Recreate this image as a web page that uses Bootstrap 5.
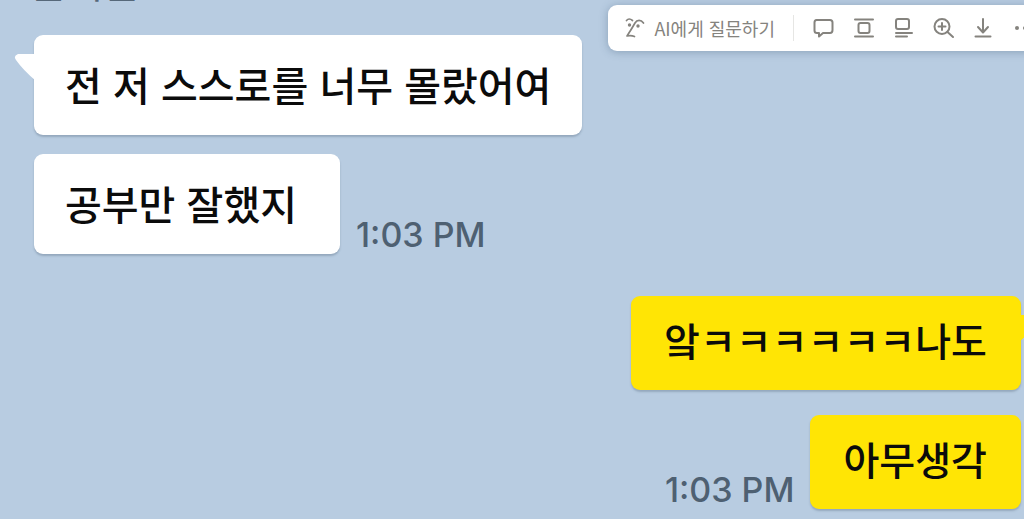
<!DOCTYPE html>
<html lang="ko">
<head>
<meta charset="utf-8">
<meta name="viewport" content="width=device-width, initial-scale=1">
<title>Chat</title>
<link href="https://cdn.jsdelivr.net/npm/bootstrap@5.3.0/dist/css/bootstrap.min.css" rel="stylesheet">
<style>
  body { background: #b8cce1; font-family: Inter, "Noto Sans CJK KR", sans-serif; }
  .chat { min-height: 100vh; }
  .sender { height: 4px; margin-left: 30px; color: #56687a; font-size: 40px; line-height: 40px; }
  .received { padding: 31px 0 0 34px; gap: 19px; }
  .sent { padding: 42px 3px 0 0; gap: 25px; }
  .bubble { border-radius: 9px; font: 500 40px/60px "Noto Sans CJK KR", sans-serif; color: #0b0b0b; box-shadow: 0 2px 2px rgba(70, 90, 110, .3); }
  .bubble-in { background: #fff; padding: 19px 31px 21px 31px; }
  .bubble-in.short { padding-right: 43px; }
  .bubble-out { background: #ffe505; font-size: 39px; padding: 13px 34px 21px 33px; }
  .tail { position: absolute; }
  .tail-in { left: -20px; top: 18px; }
  .tail-out { right: -20px; top: 18px; }
  .stamp { color: #4e6072; font-size: 34px; font-weight: 500; line-height: 38px; }
  .tools { top: 5px; right: -27px; height: 46px; padding: 0 16px; border-radius: 9px; background: #fff; color: #85837e; box-shadow: 0 1px 8px rgba(50, 80, 110, .35); }
  .tools button { color: inherit; line-height: 24px; }
  .tools svg { display: block; fill: none; stroke: currentColor; stroke-width: 2; stroke-linecap: round; stroke-linejoin: round; }
  .ask { font: 400 18px/24px "Noto Sans CJK KR", sans-serif; gap: 8px; }
  .divider { width: 1px; height: 26px; background: #e6e6e4; margin: 0 18px; }
  .actions { gap: 17px; }
</style>
</head>
<body>
<main class="chat position-relative overflow-hidden">
  <div class="sender d-flex align-items-end overflow-hidden">은서은</div>

  <section class="received d-flex flex-column align-items-start">
    <div class="bubble bubble-in position-relative">
      <svg class="tail tail-in" width="22" height="30" viewBox="0 0 22 30" aria-hidden="true"><path d="M22 1H4Q-1 3 2 7Q9 17 22 28Z" fill="#fff"/></svg>
      전 저 스스로를 너무 몰랐어여
    </div>
    <div class="d-flex align-items-end">
      <div class="bubble bubble-in short">공부만 잘했지</div>
      <time class="stamp ms-3" datetime="13:03">1:03 PM</time>
    </div>
  </section>

  <section class="sent d-flex flex-column align-items-end">
    <div class="bubble bubble-out position-relative">
      <svg class="tail tail-out" width="22" height="30" viewBox="0 0 22 30" aria-hidden="true"><path d="M0 1H18Q23 3 20 7Q13 17 0 28Z" fill="#ffe505"/></svg>
      앜ㅋㅋㅋㅋㅋㅋ나도
    </div>
    <div class="d-flex align-items-end">
      <time class="stamp me-3" datetime="13:03">1:03 PM</time>
      <div class="bubble bubble-out">아무생각</div>
    </div>
  </section>

  <div class="tools position-absolute d-flex align-items-center" role="toolbar" aria-label="이미지 도구">
    <button type="button" class="ask btn p-0 border-0 d-flex align-items-center">
      <svg width="22" height="24" viewBox="0 0 22 24" aria-hidden="true"><path d="M2.500 4.500Q5 1.500 8.500 4.500M19.500 7C17 3.500 13 3.500 11 7Q7 14 3 20Q7 19 10.500 20.500" stroke-width="1.700"/><circle cx="5.500" cy="9" r="1.700" fill="currentColor" stroke="none"/><circle cx="14" cy="10" r="1.700" fill="currentColor" stroke="none"/></svg>
      AI에게 질문하기
    </button>
    <span class="divider"></span>
    <div class="actions d-flex align-items-center">
      <button type="button" class="btn p-0 border-0" aria-label="댓글"><svg width="23" height="24" viewBox="0 0 23 24"><path d="M4.500 4H18Q20.500 4 20.500 6.500V14Q20.500 17 18 17H11L7 20.500V17H5Q2.500 17 2.500 14.500V6.500Q2.500 4 4.500 4Z"/></svg></button>
      <button type="button" class="btn p-0 border-0" aria-label="정렬"><svg width="23" height="24" viewBox="0 0 23 24"><path d="M3 3.500H21M3 20.500H21"/><rect x="6.500" y="7" width="11" height="10" rx="2"/></svg></button>
      <button type="button" class="btn p-0 border-0" aria-label="캡션"><svg width="23" height="24" viewBox="0 0 23 24"><rect x="4" y="3" width="13" height="10" rx="2"/><path d="M4 17H20M4 20.500H15"/></svg></button>
      <button type="button" class="btn p-0 border-0" aria-label="확대"><svg width="23" height="24" viewBox="0 0 23 24"><circle cx="10" cy="10.500" r="7.500"/><path d="M15.500 16L21 21M10 7V14M6.500 10.500H13.500"/></svg></button>
      <button type="button" class="btn p-0 border-0" aria-label="다운로드"><svg width="23" height="24" viewBox="0 0 23 24"><path d="M11 3V16M6 11L11 16.500L16 11M3.500 20.500H18.500"/></svg></button>
      <button type="button" class="btn p-0 border-0" aria-label="더 보기"><svg width="23" height="24" viewBox="0 0 23 24"><g fill="currentColor" stroke="none"><circle cx="5" cy="12" r="2"/><circle cx="13" cy="12" r="2"/><circle cx="21" cy="12" r="2"/></g></svg></button>
    </div>
  </div>
</main>
<script src="https://cdn.jsdelivr.net/npm/bootstrap@5.3.0/dist/js/bootstrap.bundle.min.js"></script>
</body>
</html>
